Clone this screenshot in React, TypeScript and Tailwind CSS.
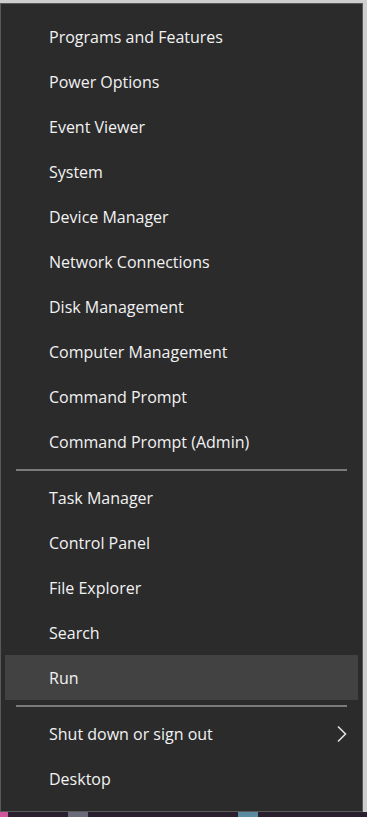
import React from "react";

const group1 = [
  "Programs and Features",
  "Power Options",
  "Event Viewer",
  "System",
  "Device Manager",
  "Network Connections",
  "Disk Management",
  "Computer Management",
  "Command Prompt",
  "Command Prompt (Admin)",
];
const group2 = ["Task Manager", "Control Panel", "File Explorer", "Search", "Run"];

function Item({ label, active, chevron }: { label: string; active?: boolean; chevron?: boolean }) {
  return (
    <div
      className={`mx-[4px] flex h-[45px] items-center justify-between pl-[44px] pr-[10px] text-[16px] text-[#f2f2f2] ${
        active ? "bg-[#424242]" : ""
      }`}
    >
      <span>{label}</span>
      {chevron && (
        <svg width="12" height="18" viewBox="0 0 12 18">
          <path d="M2 1.5 L9.5 9 L2 16.5" fill="none" stroke="#e0e0e0" strokeWidth="1.6" />
        </svg>
      )}
    </div>
  );
}

function Sep() {
  return (
    <div className="flex h-[11px] items-center px-[15px]">
      <div className="h-[2px] w-[333px] bg-[#7b7b7b]" />
    </div>
  );
}

export default function App() {
  return (
    <div
      className="flex h-[817px] w-[367px] flex-col bg-[#cfcfcf]"
      style={{ fontFamily: '"Open Sans", "Noto Sans", sans-serif' }}
    >
      <div className="mt-[3px] flex h-[809px] w-[363px] flex-col border border-[#5a5a5a] bg-[#2b2b2b] pt-[10px]">
        {group1.map((l) => (
          <Item key={l} label={l} />
        ))}
        <Sep />
        {group2.map((l) => (
          <Item key={l} label={l} active={l === "Run"} />
        ))}
        <Sep />
        <Item label="Shut down or sign out" chevron />
        <Item label="Desktop" />
      </div>
      <div className="flex h-[5px] w-full bg-[#2a1f2e]">
        <div className="h-full w-[8px] bg-[#d0559a]" />
        <div className="h-full w-[60px]" />
        <div className="h-full w-[20px] bg-[#6a6a7a]" />
        <div className="h-full w-[150px]" />
        <div className="h-full w-[20px] bg-[#5a8aa0]" />
      </div>
    </div>
  );
}
